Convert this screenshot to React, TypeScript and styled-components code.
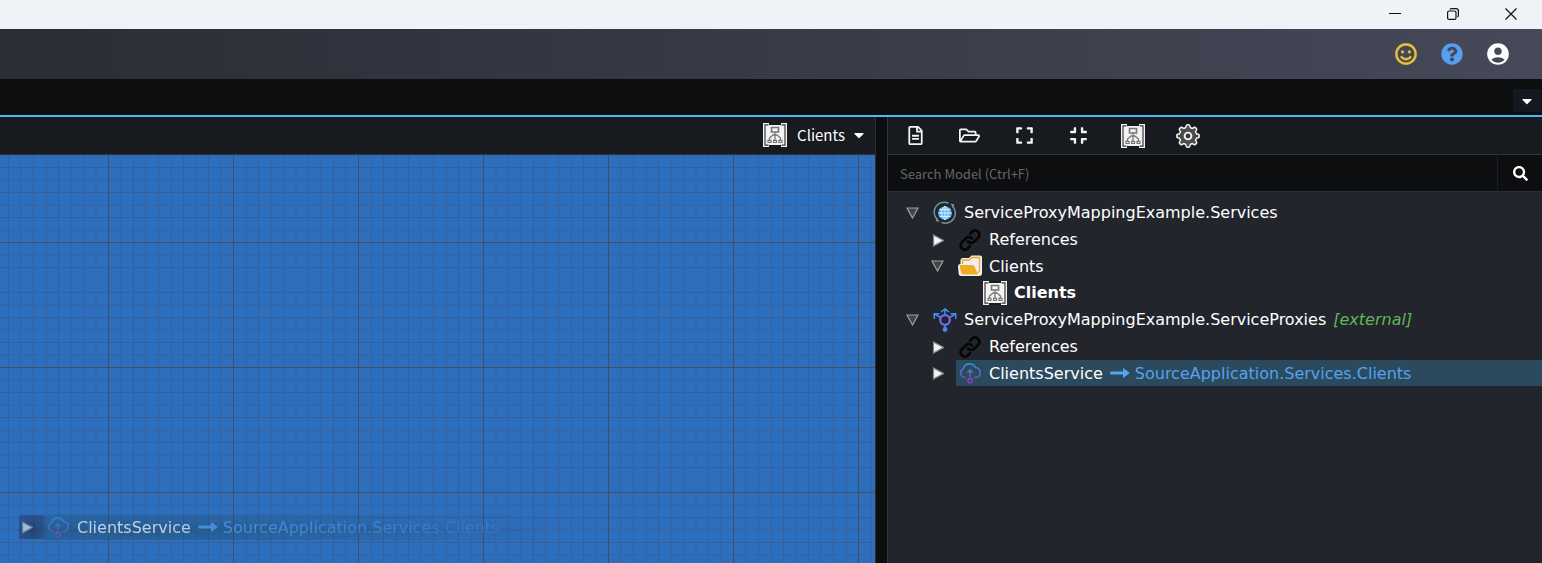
import React from "react";
import styled, { createGlobalStyle } from "styled-components";
import {
  FaCaretDown,
  FaCompress,
  FaExpand,
  FaQuestionCircle,
  FaRegFileAlt,
  FaRegFolderOpen,
  FaRegSmile,
  FaSearch,
} from "react-icons/fa";
import { MdAccountCircle } from "react-icons/md";

const uiFont = `"Noto Sans CJK SC", "Open Sans", sans-serif`;
const treeFont = `"DejaVu Sans", Verdana, sans-serif`;

const GlobalStyle = createGlobalStyle`
  *, *::before, *::after { box-sizing: border-box; }
  body { margin: 0; background: #0c0e10; color: #fff; font-family: ${uiFont}; }
  button { margin: 0; padding: 0; border: 0; background: none; color: inherit; font: inherit; cursor: pointer; }
  ul { margin: 0; padding: 0; list-style: none; }
  svg { display: block; flex: none; }
`;

const Page = styled.div`
  display: flex;
  flex-direction: column;
  height: 100vh;
  overflow: hidden;
`;

const TitleBar = styled.div`
  display: flex;
  justify-content: flex-end;
  flex: none;
  height: 29px;
  padding: 0 2px 1px 0;
  background: #eef3f8;
  color: #111;
`;

const WindowButton = styled.button`
  display: flex;
  align-items: center;
  justify-content: center;
  width: 58px;
`;

const Header = styled.header`
  display: flex;
  align-items: center;
  justify-content: flex-end;
  flex: none;
  gap: 22px;
  height: 50px;
  padding-right: 32px;
  background: linear-gradient(90deg, #2a2d35, #454958);
`;

const HeaderButton = styled.button<{ $color: string }>`
  display: flex;
  align-items: center;
  justify-content: center;
  width: 24px;
  height: 24px;
  color: ${(p) => p.$color};
`;

const TabStrip = styled.div`
  display: flex;
  align-items: flex-end;
  justify-content: flex-end;
  flex: none;
  height: 38px;
  padding: 0 1px 3px 0;
  border-bottom: 2px solid #4ab9f8;
  background: #0c0e10;
`;

const TabMenuButton = styled.button`
  display: flex;
  align-items: center;
  justify-content: center;
  width: 28px;
  height: 23px;
  background: #15181e;
`;

const Workspace = styled.div`
  display: flex;
  flex: 1;
  min-height: 0;
`;

const DesignerPane = styled.section`
  display: flex;
  flex-direction: column;
  flex: 1;
  min-width: 0;
  border-right: 1px solid #2b2d36;
`;

const Splitter = styled.div`
  width: 11px;
  background: #0c0d0f;
`;

const ModelPane = styled.section`
  display: flex;
  flex-direction: column;
  flex: 0 0 655px;
  border-left: 1px solid #2f313b;
  background: #23252d;
`;

const Toolbar = styled.div<{ $end?: boolean }>`
  display: flex;
  align-items: center;
  justify-content: ${(p) => (p.$end ? "flex-end" : "flex-start")};
  flex: none;
  height: 38px;
  padding: ${(p) => (p.$end ? "0 8px 2px" : "0")};
  border-bottom: 1px solid #2f323c;
  background: #171a1e;
`;

const DiagramPicker = styled.button`
  display: flex;
  align-items: center;
  gap: 10px;
  font-size: 15px;
  line-height: 24px;
`;

const PickerLabel = styled.span`
  display: flex;
  align-items: center;
  gap: 6px;
`;

const ToolGroup = styled.div`
  display: grid;
  grid-template-columns: repeat(6, 1fr);
  width: 327px;
`;

const ToolButton = styled.button`
  display: flex;
  align-items: center;
  justify-content: center;
  height: 37px;
  color: #f4f4f4;
`;

const Canvas = styled.div`
  position: relative;
  flex: 1;
  background-color: #2d6fbf;
  background-image:
    linear-gradient(90deg, #474e5e 1px, transparent 1px),
    linear-gradient(#474e5e 1px, transparent 1px),
    linear-gradient(90deg, #385f98 1px, transparent 1px),
    linear-gradient(#385f98 1px, transparent 1px),
    linear-gradient(90deg, #3268ae 2px, transparent 2px),
    linear-gradient(#3268ae 2px, transparent 2px);
  background-size: 125px 125px, 125px 125px, 25px 25px, 25px 25px, 25px 25px, 25px 25px;
  background-position: 108px 0, 0 87px, 8px 0, 0 12px, 20px 0, 0 24px;
`;

const SearchBar = styled.form`
  display: flex;
  flex: none;
  height: 37px;
  border-bottom: 1px solid #2b2d36;
  background: #0c0e0f;
`;

const SearchInput = styled.input`
  flex: 1;
  min-width: 0;
  padding: 0 12px;
  border: 0;
  outline: 0;
  background: transparent;
  color: #ddd;
  font-family: ${uiFont};
  font-size: 13px;
  &::placeholder { color: #666; opacity: 1; }
`;

const SearchButton = styled.button`
  display: flex;
  align-items: center;
  justify-content: center;
  width: 45px;
  border-left: 1px solid #1b1d22;
`;

const Tree = styled.ul`
  padding-top: 7px;
  font-family: ${treeFont};
  font-size: 16px;
`;

const Row = styled.div<{ $level: number; $compact?: boolean }>`
  display: flex;
  align-items: center;
  height: ${(p) => (p.$compact ? 26 : 27)}px;
  padding-left: ${(p) => 12 + p.$level * 25}px;
`;

const Toggle = styled.button`
  display: flex;
  align-items: center;
  justify-content: center;
  flex: none;
  width: 25px;
  height: 24px;
`;

const Spacer = styled.span`
  flex: none;
  width: 25px;
`;

const Node = styled.div<{ $selected?: boolean; $bold?: boolean }>`
  display: flex;
  align-items: center;
  flex: 1;
  gap: 7px;
  height: 26px;
  margin-left: 6px;
  padding-left: 2px;
  white-space: nowrap;
  background: ${(p) => (p.$selected ? "#2b4a5e" : "transparent")};
  font-weight: ${(p) => (p.$bold ? 700 : 400)};
`;

const External = styled.em`
  color: #63b556;
`;

const Mapping = styled.span`
  display: flex;
  align-items: center;
  gap: 5px;
  color: #56a2ee;
`;

const DragImage = styled.div`
  position: absolute;
  left: 19px;
  bottom: 23px;
  display: flex;
  align-items: center;
  width: 560px;
  font-family: ${treeFont};
  font-size: 16px;
  opacity: 0.7;
  pointer-events: none;
  mask-image: linear-gradient(90deg, rgba(0, 0, 0, 0.8), #000 110px, rgba(0, 0, 0, 0.8) 230px, rgba(0, 0, 0, 0.25) 460px, transparent 550px);
`;

const DragToggle = styled.span`
  display: flex;
  align-items: center;
  flex: none;
  width: 25px;
  height: 24px;
  padding-left: 2px;
  background: radial-gradient(ellipse at 50% 60%, #20263c, rgba(32, 38, 60, 0.5));
`;

const DragNode = styled.div`
  display: flex;
  align-items: center;
  flex: 1;
  gap: 7px;
  height: 26px;
  padding-left: 2px;
  white-space: nowrap;
  background: linear-gradient(rgba(32, 78, 108, 0.3), rgba(32, 78, 108, 0.85) 60%, rgba(32, 78, 108, 0.55));
`;

const DiagramIcon = () => (
  <svg width="24" height="24" viewBox="0 0 24 24" fill="none">
    <path d="M0 0h6v2h12V0h6v24h-6v-2H6v2H0z" fill="#f4f2f3" />
    <path d="M6 0h12v2H6zM6 22h12v2H6z" fill="#171a1e" />
    <path d="M5.500 1.800H2v20.400h3.500M18.500 1.800H22v20.400h-3.500" stroke="#3a3a3a" strokeWidth="1.200" />
    <path d="M8.500 4.500h7v4.500h-7z" stroke="#777" strokeWidth="1.600" />
    <path d="M12 9v8M9.500 12h5M6.500 17v-2l3.500-3M17.500 17v-2L14 12" stroke="#777" strokeWidth="1.300" />
    <path d="M5 17.300h3v2.200H5zM10.500 17.300h3v2.200h-3zM16 17.300h3v2.200h-3z" stroke="#777" strokeWidth="1.200" />
  </svg>
);

const GearIcon = () => {
  const teeth = Array.from({ length: 96 }, (_, i) => {
    const a = (i / 96) * Math.PI * 2;
    const r = 9.900 + 1.300 * Math.tanh(2.500 * Math.cos(8 * a));
    return `${(12 + r * Math.sin(a)).toFixed(2)},${(12 - r * Math.cos(a)).toFixed(2)}`;
  }).join(" ");
  return (
    <svg width="24" height="24" viewBox="0 0 24 24">
      <polygon points={teeth} fill="#4c4c4c" stroke="#f4f4f4" strokeWidth="1.500" strokeLinejoin="round" />
      <circle cx="12" cy="12" r="3.400" fill="#3a3a3a" stroke="#f4f4f4" strokeWidth="1.900" />
    </svg>
  );
};

const GlobeIcon = () => (
  <svg width="24" height="24" viewBox="0 0 24 24" fill="none">
    <path d="M15.500 2.200A10 10 0 0 0 4 18.200M8.500 21.400A10 10 0 0 0 19.800 5.500" stroke="#78909c" strokeWidth="1.500" />
    <path d="M17.500 2.500l4 1-1.500 3.500zM6.500 21l-4-1L4 16.500z" fill="#78909c" />
    <circle cx="12" cy="12" r="6.800" fill="#5db2f6" />
    <path d="M12 5.200v13.600M5.200 12h13.600M6.500 8.600h11M6.500 15.400h11M12 5.200c-4.500 3.500-4.500 10 0 13.600M12 5.200c4.500 3.500 4.500 10 0 13.600" stroke="#d9eefe" strokeWidth="1" />
  </svg>
);

const LinkIcon = () => (
  <svg width="24" height="24" viewBox="0 0 24 24" fill="none" stroke="#050505" strokeWidth="2.600" strokeLinecap="round">
    <path d="M10 13.500a4.300 4.300 0 0 0 6 .3l4.500-4.500a4.300 4.300 0 0 0-6-6L12 5.800" />
    <path d="M14 10.500a4.300 4.300 0 0 0-6-.3l-4.500 4.500a4.300 4.300 0 0 0 6 6l2.500-2.500" />
  </svg>
);

const FolderIcon = () => (
  <svg width="24" height="22" viewBox="0 0 24 22">
    <path d="M2.500 5.500Q2.500 3 5 3h6l2.500-2.500H22q2 0 2 2V18q0 3-3 3H3q-2 0-2.300-2L0 11q0-1.800 2.500-2z" fill="#f6f1ea" />
    <path d="M4.500 9V5h7L14 2.500h7.500v13L20 18" fill="#f1eff2" stroke="#efaa20" strokeWidth="1.300" />
    <path d="M1.500 10H14.500q1.500 0 2 1.500l3.500 8H5.500q-2 0-2.500-2z" fill="#efac24" />
  </svg>
);

const ProxyIcon = () => (
  <svg width="24" height="24" viewBox="0 0 24 24" fill="none" stroke="#3b8ff0" strokeWidth="1.500">
    <path d="M12 6.500V1M8 4l4-3.200L16 4M7.500 9.500L2 6.300M1.300 11V5.700h5.200M16.500 9.500L22 6.300M22.700 11V5.700h-5.200M12 17v3" />
    <circle cx="12" cy="12" r="4.800" stroke="#7a68f0" strokeWidth="2.200" />
    <circle cx="12" cy="21.500" r="2.400" fill="#3b8ff0" stroke="none" />
  </svg>
);

const CloudIcon = ({ id }: { id: string }) => (
  <svg width="24" height="24" viewBox="0 0 24 24" fill="none" stroke={`url(#${id})`} strokeWidth="1.600">
    <defs>
      <linearGradient id={id} gradientUnits="userSpaceOnUse" x1="12" y1="2" x2="12" y2="20">
        <stop offset="0" stopColor="#2795cf" />
        <stop offset="1" stopColor="#7f45ac" />
      </linearGradient>
    </defs>
    <path d="M8 16.500H6a4.500 4.500 0 0 1-.8-8.500A6.500 6.500 0 0 1 17.400 6.500 5.100 5.100 0 0 1 18.400 16.500H16" />
    <path d="M12 16.500V9.500M9.200 11.800l2.800-3 2.800 3" />
    <circle cx="12" cy="19.800" r="2.200" />
  </svg>
);

const ArrowIcon = () => (
  <svg width="20" height="12" viewBox="0 0 20 12" fill="#56a2ee">
    <path d="M1.500 4.500H13V2q0-1.200 1-.5l5.200 4q.6.500 0 1l-5.200 4q-1 .7-1-.5V7.500H1.500Q0 7.500 0 6t1.500-1.500z" />
  </svg>
);

const Arrow = ({ open }: { open: boolean }) =>
  open ? (
    <svg width="13" height="12" viewBox="0 0 13 12">
      <path d="M1 1h11L6.500 11z" fill="#444" stroke="#a0a0a0" strokeWidth="1.200" />
    </svg>
  ) : (
    <svg width="12" height="14" viewBox="0 0 12 14">
      <path d="M1.500 2v11L11.500 7.500z" fill="#f4f4f4" stroke="#858585" strokeWidth="1.200" />
    </svg>
  );

type ItemProps = {
  level: number;
  icon: React.ReactNode;
  label: string;
  open?: boolean;
  bold?: boolean;
  selected?: boolean;
  compact?: boolean;
  extra?: React.ReactNode;
};

const TreeItem = ({ level, icon, label, open, bold, selected, compact, extra }: ItemProps) => (
  <li>
    <Row $level={level} $compact={compact}>
      {open === undefined ? (
        <Spacer />
      ) : (
        <Toggle aria-label={`Toggle ${label}`} aria-expanded={open}>
          <Arrow open={open} />
        </Toggle>
      )}
      <Node $bold={bold} $selected={selected}>
        {icon}
        <span>{label}</span>
        {extra}
      </Node>
    </Row>
  </li>
);

const ServiceMapping = () => (
  <Mapping>
    <ArrowIcon />
    SourceApplication.Services.Clients
  </Mapping>
);

export default function App() {
  return (
    <Page>
      <GlobalStyle />
      <TitleBar>
        <WindowButton aria-label="Minimize">
          <svg width="12" height="12" viewBox="0 0 12 12" stroke="#111"><path d="M0 5.500h12" /></svg>
        </WindowButton>
        <WindowButton aria-label="Restore">
          <svg width="12" height="12" viewBox="0 0 12 12" fill="none" stroke="#111" strokeWidth="1.200">
            <rect x=".6" y="3" width="8.400" height="8.400" rx="1.500" />
            <path d="M3 1.500Q3.500.6 4.500.6H9Q11.400.6 11.400 3v4.500q0 1-.9 1.500" />
          </svg>
        </WindowButton>
        <WindowButton aria-label="Close">
          <svg width="12" height="12" viewBox="0 0 12 12" stroke="#111" strokeWidth="1.200"><path d="M.5.5l11 11M11.500.5l-11 11" /></svg>
        </WindowButton>
      </TitleBar>
      <Header>
        <HeaderButton $color="#e9c23c" aria-label="Feedback"><FaRegSmile size={22} stroke="currentColor" strokeWidth={10} /></HeaderButton>
        <HeaderButton $color="#559fee" aria-label="Help"><FaQuestionCircle size={22} /></HeaderButton>
        <HeaderButton $color="#fff" aria-label="Account"><MdAccountCircle size={26} /></HeaderButton>
      </Header>
      <TabStrip>
        <TabMenuButton aria-label="Open tabs"><FaCaretDown size={16} /></TabMenuButton>
      </TabStrip>
      <Workspace>
        <DesignerPane>
          <Toolbar $end>
            <DiagramPicker>
              <DiagramIcon />
              <PickerLabel>
                Clients
                <FaCaretDown size={16} />
              </PickerLabel>
            </DiagramPicker>
          </Toolbar>
          <Canvas>
            <DragImage>
              <DragToggle><Arrow open={false} /></DragToggle>
              <DragNode>
                <CloudIcon id="cloud-drag" />
                <span>ClientsService</span>
                <ServiceMapping />
              </DragNode>
            </DragImage>
          </Canvas>
        </DesignerPane>
        <Splitter />
        <ModelPane>
          <Toolbar>
            <ToolGroup>
              <ToolButton aria-label="New"><FaRegFileAlt size={19} /></ToolButton>
              <ToolButton aria-label="Open"><FaRegFolderOpen size={21} /></ToolButton>
              <ToolButton aria-label="Expand all"><FaExpand size={19} /></ToolButton>
              <ToolButton aria-label="Collapse all"><FaCompress size={19} /></ToolButton>
              <ToolButton aria-label="Diagram"><DiagramIcon /></ToolButton>
              <ToolButton aria-label="Settings"><GearIcon /></ToolButton>
            </ToolGroup>
          </Toolbar>
          <SearchBar>
            <SearchInput aria-label="Search Model" placeholder="Search Model (Ctrl+F)" />
            <SearchButton type="button" aria-label="Search"><FaSearch size={15} /></SearchButton>
          </SearchBar>
          <Tree>
            <TreeItem level={0} open icon={<GlobeIcon />} label="ServiceProxyMappingExample.Services" />
            <TreeItem level={1} open={false} icon={<LinkIcon />} label="References" />
            <TreeItem level={1} open compact icon={<FolderIcon />} label="Clients" />
            <TreeItem level={2} bold icon={<DiagramIcon />} label="Clients" />
            <TreeItem
              level={0}
              open
              icon={<ProxyIcon />}
              label="ServiceProxyMappingExample.ServiceProxies"
              extra={<External>[external]</External>}
            />
            <TreeItem level={1} open={false} icon={<LinkIcon />} label="References" />
            <TreeItem
              level={1}
              open={false}
              compact
              selected
              icon={<CloudIcon id="cloud-tree" />}
              label="ClientsService"
              extra={<ServiceMapping />}
            />
          </Tree>
        </ModelPane>
      </Workspace>
    </Page>
  );
}
